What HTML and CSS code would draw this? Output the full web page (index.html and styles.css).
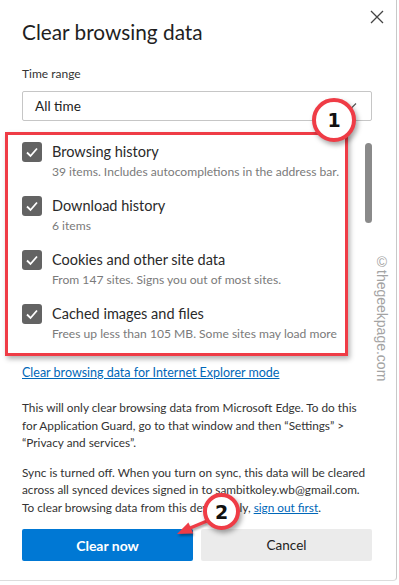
FILE: index.html
```html
<!DOCTYPE html>
<html lang="en">
<head>
    <meta charset="UTF-8">
    <meta name="viewport" content="width=device-width, initial-scale=1.0">
    <title>Clear browsing data</title>
    <link rel="stylesheet" href="styles.css">
</head>
<body>

<div class="dialog">
    <button class="close-btn" aria-label="Close">
        <svg width="14" height="14" viewBox="0 0 14 14"><path d="M1 1 L13 13 M13 1 L1 13" stroke="#444" stroke-width="1.3" fill="none"/></svg>
    </button>

    <h1 class="title">Clear browsing data</h1>

    <div class="field-label">Time range</div>
    <div class="select">
        <span>All time</span>
        <svg class="chevron" width="12" height="8" viewBox="0 0 12 8"><path d="M1 1.5 L6 6.5 L11 1.5" stroke="#555" stroke-width="1.2" fill="none"/></svg>
    </div>

    <div class="items">
        <div class="item">
            <span class="checkbox"><svg width="20" height="20" viewBox="0 0 20 20"><path d="M5 10.5 L8.5 14 L15 6.5" stroke="#fff" stroke-width="1.8" fill="none"/></svg></span>
            <div class="item-text">
                <div class="item-title">Browsing history</div>
                <div class="item-sub">39 items. Includes autocompletions in the address bar.</div>
            </div>
        </div>
        <div class="item">
            <span class="checkbox"><svg width="20" height="20" viewBox="0 0 20 20"><path d="M5 10.5 L8.5 14 L15 6.5" stroke="#fff" stroke-width="1.8" fill="none"/></svg></span>
            <div class="item-text">
                <div class="item-title">Download history</div>
                <div class="item-sub">6 items</div>
            </div>
        </div>
        <div class="item">
            <span class="checkbox"><svg width="20" height="20" viewBox="0 0 20 20"><path d="M5 10.5 L8.5 14 L15 6.5" stroke="#fff" stroke-width="1.8" fill="none"/></svg></span>
            <div class="item-text">
                <div class="item-title">Cookies and other site data</div>
                <div class="item-sub">From 147 sites. Signs you out of most sites.</div>
            </div>
        </div>
        <div class="item">
            <span class="checkbox"><svg width="20" height="20" viewBox="0 0 20 20"><path d="M5 10.5 L8.5 14 L15 6.5" stroke="#fff" stroke-width="1.8" fill="none"/></svg></span>
            <div class="item-text">
                <div class="item-title">Cached images and files</div>
                <div class="item-sub">Frees up less than 105 MB. Some sites may load more</div>
            </div>
        </div>

        <span class="scrollbar"></span>
        <span class="mark-box"></span>
    </div>

    <a class="ie-link" href="#">Clear browsing data for Internet Explorer mode</a>

    <p class="note">This will only clear browsing data from Microsoft Edge. To do this<br>
        for Application Guard, go to that window and then “Settings” &gt;<br>
        “Privacy and services”.</p>

    <p class="note sync-note">Sync is turned off. When you turn on sync, this data will be cleared<br>
        across all synced devices signed in to sambitkoley.wb@gmail.com.<br>
        To clear browsing data from this device only, <a href="#">sign out first</a>.</p>

    <div class="actions">
        <button class="btn btn-primary">Clear now</button>
        <button class="btn btn-secondary">Cancel</button>
    </div>
</div>

<!-- tutorial annotations drawn over the dialog -->
<span class="badge badge-one">1</span>
<svg class="arrow" width="40" height="28" viewBox="0 0 40 28">
    <path d="M32 7 L14 14.5" stroke="#ef3c46" stroke-width="3.5" fill="none"/>
    <path d="M2 20 L13.4 8.5 L18.2 19.5 Z" fill="#ef3c46"/>
</svg>
<span class="badge badge-two">2</span>
<span class="watermark">©thegeekpage.com</span>

</body>
</html>
```

FILE: styles.css
```css
body {
    margin: 0;
    background-color: #fff;
    font-family: Lato, "Noto Sans", sans-serif;
    color: #2b2b2b;
}

.dialog {
    position: relative;
    width: 397px;
    height: 581px;
    box-sizing: border-box;
    padding: 17px 24px 0 22px;
    border-right: 1px solid #c8c8c8;
    border-bottom: 1px solid #dcdcdc;
    border-bottom-right-radius: 4px;
}

.close-btn {
    position: absolute;
    top: 10px;
    right: 11px;
    width: 16px;
    height: 16px;
    padding: 0;
    border: none;
    background: none;
}

.title {
    margin: 0;
    font-size: 20.8px;
    font-weight: 400;
    line-height: 30px;
    color: #1f1f1f;
}

.field-label {
    margin-top: 19px;
    font-size: 12px;
    line-height: 16px;
    color: #333;
}

.select {
    display: flex;
    align-items: center;
    justify-content: space-between;
    height: 28px;
    margin-top: 9px;
    padding: 0 14px 0 12px;
    border: 1px solid #c6c6c6;
    border-radius: 2px;
    font-size: 13.6px;
    color: #222;
}

.items {
    position: relative;
    margin-top: 11px;
    padding-top: 10px;
    padding-bottom: 12px;
}

.item {
    display: flex;
    gap: 10px;
    margin-bottom: 14px;
}

.item:last-of-type {
    margin-bottom: 0;
}

.checkbox {
    flex: none;
    width: 20px;
    height: 20px;
    border-radius: 3px;
    background-color: #636363;
}

.item-title {
    font-size: 14.5px;
    line-height: 20px;
    color: #2a2a2a;
}

.item-sub {
    font-size: 12.1px;
    line-height: 20px;
    color: #7a7a7a;
    white-space: nowrap;
}

.scrollbar {
    position: absolute;
    top: 11px;
    right: 0;
    width: 7px;
    height: 80px;
    border-radius: 4px;
    background-color: #8a8a8a;
}

.mark-box {
    position: absolute;
    top: 0;
    left: -17px;
    right: 24px;
    bottom: 0;
    border: 3px solid #ef3c46;
    box-shadow: 2px 3px 5px rgba(0, 0, 0, 0.3);
}

.ie-link {
    display: block;
    margin-top: 8px;
    font-size: 12.5px;
    line-height: 18px;
    color: #0067b8;
}

.note {
    margin: 17px 0 0;
    font-size: 11.8px;
    line-height: 17.5px;
    color: #333;
    white-space: nowrap;
}

.sync-note {
    margin-top: 12px;
}

.sync-note a {
    color: #0067b8;
}

.actions {
    display: flex;
    gap: 8px;
    margin-top: 13px;
}

.btn {
    flex: 1;
    height: 32px;
    border: none;
    border-radius: 2px;
    font-family: inherit;
    font-size: 14px;
}

.btn-primary {
    background-color: #0078d4;
    color: #fff;
    font-weight: 700;
}

.btn-secondary {
    background-color: #ebebeb;
    color: #222;
    font-size: 13.5px;
}

.badge {
    position: absolute;
    display: flex;
    align-items: center;
    justify-content: center;
    box-sizing: border-box;
    border: 4px solid #ef3c46;
    border-radius: 50%;
    background-color: #fff;
    color: #111;
    font-family: "DejaVu Sans", sans-serif;
    font-weight: 700;
    font-size: 19px;
    box-shadow: 2px 3px 5px rgba(0, 0, 0, 0.35);
}

.badge-one {
    left: 312px;
    top: 98px;
    width: 44px;
    height: 44px;
}

.badge-two {
    left: 203px;
    top: 493px;
    width: 37px;
    height: 37px;
}

.arrow {
    position: absolute;
    left: 175px;
    top: 514px;
    filter: drop-shadow(1px 2px 1px rgba(0, 0, 0, 0.35));
}

.watermark {
    position: absolute;
    left: 374px;
    top: 254px;
    writing-mode: vertical-rl;
    font-family: "Liberation Sans", sans-serif;
    font-size: 14px;
    color: #a3a3a3;
}
```
